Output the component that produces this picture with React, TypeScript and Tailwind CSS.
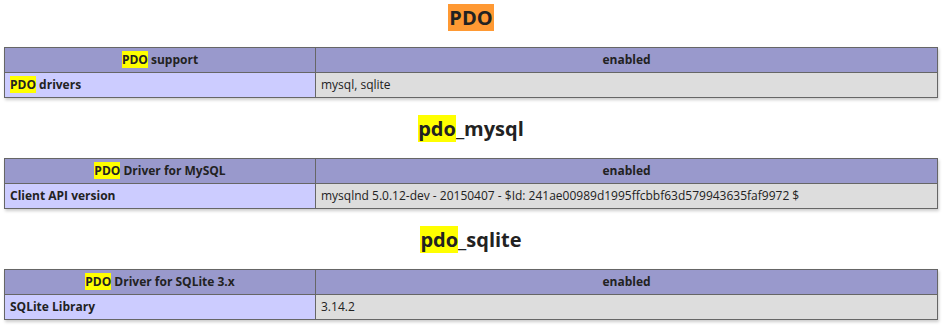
const sections = [
  {
    title: "PDO",
    hl: "PDO",
    rest: "",
    orange: true,
    head: ["support", "enabled"],
    row: { hl: "PDO", label: " drivers", value: "mysql, sqlite" },
  },
  {
    title: "pdo_mysql",
    hl: "pdo",
    rest: "_mysql",
    orange: false,
    head: ["Driver for MySQL", "enabled"],
    row: {
      hl: "",
      label: "Client API version",
      value: "mysqlnd 5.0.12-dev - 20150407 - $Id: 241ae00989d1995ffcbbf63d579943635faf9972 $",
    },
  },
  {
    title: "pdo_sqlite",
    hl: "pdo",
    rest: "_sqlite",
    orange: false,
    head: ["Driver for SQLite 3.x", "enabled"],
    row: { hl: "", label: "SQLite Library", value: "3.14.2" },
  },
];

type Section = (typeof sections)[0];

const Block = ({ s }: { s: Section }) => (
  <div className="flex flex-col">
    <h2 className="text-center text-[20px] font-bold leading-[26px] text-[#222]">
      <span className={s.orange ? "bg-[#ff9933] px-px" : "bg-[#ffff00]"}>{s.hl}</span>
      {s.rest}
    </h2>
    <table className="mx-[4px] mt-[16px] w-[934px] border-collapse text-[12px] text-[#222] shadow-[1px_2px_3px_#ccc]">
      <tbody>
        <tr className="h-[25px] bg-[#9999cc] font-bold">
          <th className="w-[311px] border border-[#666] px-[5px] text-center">
            <span className="bg-[#ffff00]">PDO</span> {s.head[0]}
          </th>
          <th className="border border-[#666] px-[5px] text-center">{s.head[1]}</th>
        </tr>
        <tr className="h-[25px]">
          <td className="border border-[#666] bg-[#ccccff] px-[5px] font-bold">
            {s.row.hl && <span className="bg-[#ffff00]">{s.row.hl}</span>}
            {s.row.label}
          </td>
          <td className="border border-[#666] bg-[#dddddd] px-[5px]">{s.row.value}</td>
        </tr>
      </tbody>
    </table>
  </div>
);

export default function App() {
  return (
    <div
      className="flex h-[327px] w-[942px] flex-col gap-[18px] overflow-hidden bg-white pt-[5px]"
      style={{ fontFamily: '"Open Sans", "Noto Sans", sans-serif' }}
    >
      {sections.map((s) => (
        <Block key={s.title} s={s} />
      ))}
    </div>
  );
}
